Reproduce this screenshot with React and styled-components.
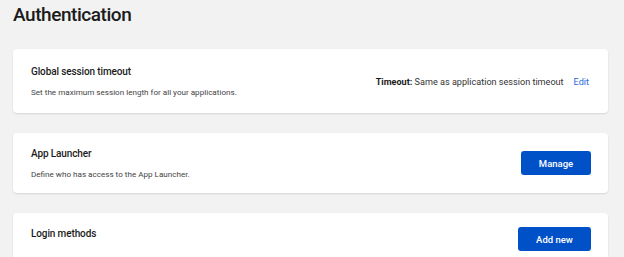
import styled, { createGlobalStyle } from "styled-components";

const GlobalStyle = createGlobalStyle`
  html, body {
    margin: 0;
    padding: 0;
    background: #f2f2f2;
    font-family: Roboto, "Noto Sans", "Liberation Sans", sans-serif;
    color: #1b1b1b;
    overflow: hidden;
  }
`;

const Page = styled.main`
  padding: 4px 16px 0 13px;
`;

const Title = styled.h1`
  margin: 0 0 23px;
  font-size: 19px;
  line-height: 22px;
  font-weight: 500;
  letter-spacing: -0.45px;
`;

const Stack = styled.div`
  display: flex;
  flex-direction: column;
  gap: 20px;
`;

const Card = styled.section`
  display: flex;
  align-items: ${(p) => (p.$top ? "flex-start" : "center")};
  justify-content: space-between;
  min-height: ${(p) => p.$height}px;
  box-sizing: border-box;
  padding: ${(p) => (p.$top ? "14px 17px 0 18px" : "0 17px 0 18px")};
  background: #fff;
  border-radius: 4px;
  box-shadow: 0 1px 2px rgba(0, 0, 0, 0.12);
`;

const Info = styled.div`
  display: flex;
  flex-direction: column;
  gap: 9px;
`;

const CardTitle = styled.h2`
  margin: 0;
  font-size: 10px;
  line-height: 13px;
  font-weight: 500;
  letter-spacing: -0.12px;
`;

const Desc = styled.p`
  margin: 0;
  font-size: 8.1px;
  line-height: 11px;
  color: #444;
`;

const Meta = styled.div`
  display: flex;
  align-items: center;
  gap: 10px;
  font-size: 9.1px;
  color: #333;
  margin: 2px 2px 0 0;
`;

const Strong = styled.strong`
  font-weight: 700;
  color: #1b1b1b;
`;

const Link = styled.a`
  color: #2a6ad8;
  text-decoration: none;
  cursor: pointer;
`;

const Button = styled.button`
  width: ${(p) => p.$width}px;
  height: 24px;
  border: none;
  border-radius: 3px;
  background: #0051c8;
  color: #fff;
  font-family: inherit;
  font-size: 9.5px;
  font-weight: 500;
  cursor: pointer;
`;

export default function App() {
  return (
    <>
      <GlobalStyle />
      <Page>
        <Title>Authentication</Title>
        <Stack>
          <Card $height={64}>
            <Info>
              <CardTitle>Global session timeout</CardTitle>
              <Desc>Set the maximum session length for all your applications.</Desc>
            </Info>
            <Meta>
              <span>
                <Strong>Timeout:</Strong> Same as application session timeout
              </span>
              <Link>Edit</Link>
            </Meta>
          </Card>
          <Card $height={60}>
            <Info>
              <CardTitle>App Launcher</CardTitle>
              <Desc>Define who has access to the App Launcher.</Desc>
            </Info>
            <Button $width={70}>Manage</Button>
          </Card>
          <Card $height={60} $top>
            <Info>
              <CardTitle>Login methods</CardTitle>
            </Info>
            <Button $width={73}>Add new</Button>
          </Card>
        </Stack>
      </Page>
    </>
  );
}
